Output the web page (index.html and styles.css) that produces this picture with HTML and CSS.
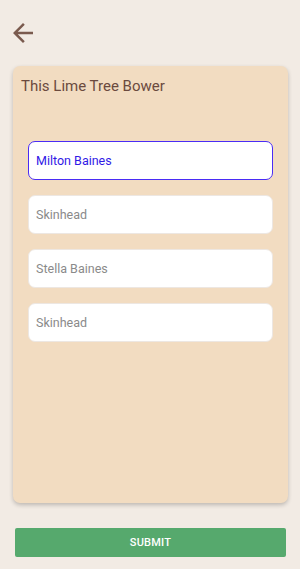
FILE: index.html
```html
<!DOCTYPE html>
<html lang="en">
<head>
  <meta charset="UTF-8" />
  <title>This Lime Tree Bower</title>
  <link rel="stylesheet" href="styles.css">
</head>
<body>
  <div class="topbar">
    <button class="back" type="button" aria-label="Back">
      <svg width="30" height="30" viewBox="0 0 24 24"><path d="M20 11H7.83l5.59-5.59L12 4l-8 8 8 8 1.41-1.41L7.83 13H20v-2z" fill="#7a5a4e"/></svg>
    </button>
  </div>

  <div class="card">
    <h2 class="card-title">This Lime Tree Bower</h2>
    <div class="fields">
      <input class="field focused" type="text" value="Milton Baines">
      <input class="field" type="text" placeholder="Skinhead">
      <input class="field" type="text" placeholder="Stella Baines">
      <input class="field" type="text" placeholder="Skinhead">
    </div>
  </div>

  <button class="submit" type="button">SUBMIT</button>
</body>
</html>
```

FILE: styles.css
```css
body {
  margin: 0;
  background: #f2ebe4;
  font-family: Roboto, "Noto Sans", sans-serif;
  width: 300px;
  height: 569px;
  overflow: hidden;
}
.topbar {
  height: 66px;
  box-sizing: border-box;
  padding: 18px 0 0 8px;
}
.back {
  background: none;
  border: none;
  padding: 0;
  width: 30px;
  height: 30px;
  display: block;
}
.card {
  margin: 0 12px 0 13px;
  height: 437px;
  background: #f2dcc1;
  border-radius: 7px;
  box-shadow: 0 2px 4px rgba(0,0,0,0.22);
  box-sizing: border-box;
  padding: 10px 15px 0 8px;
}
.card-title {
  margin: 0;
  font-size: 15px;
  font-weight: 400;
  color: #6b4a3e;
  line-height: 20px;
}
.fields {
  display: flex;
  flex-direction: column;
  gap: 15px;
  margin-top: 45px;
  padding-left: 7px;
}
.field {
  height: 39px;
  box-sizing: border-box;
  border: 1px solid #ede7e2;
  border-radius: 7px;
  background: #fff;
  padding: 0 7px;
  font-family: Roboto, sans-serif;
  font-size: 12.5px;
  color: #777;
  outline: none;
}
.field::placeholder {
  color: #8a8a8a;
}
.field.focused {
  border-color: #4a2cf5;
  color: #3119e6;
}
.submit {
  display: block;
  margin: 25px 0 0 15px;
  width: 271px;
  height: 29px;
  border: none;
  border-radius: 2px;
  background: #56a96d;
  color: #fff;
  font-family: Roboto, sans-serif;
  font-size: 11px;
  font-weight: 500;
  letter-spacing: 0.2px;
}
```
